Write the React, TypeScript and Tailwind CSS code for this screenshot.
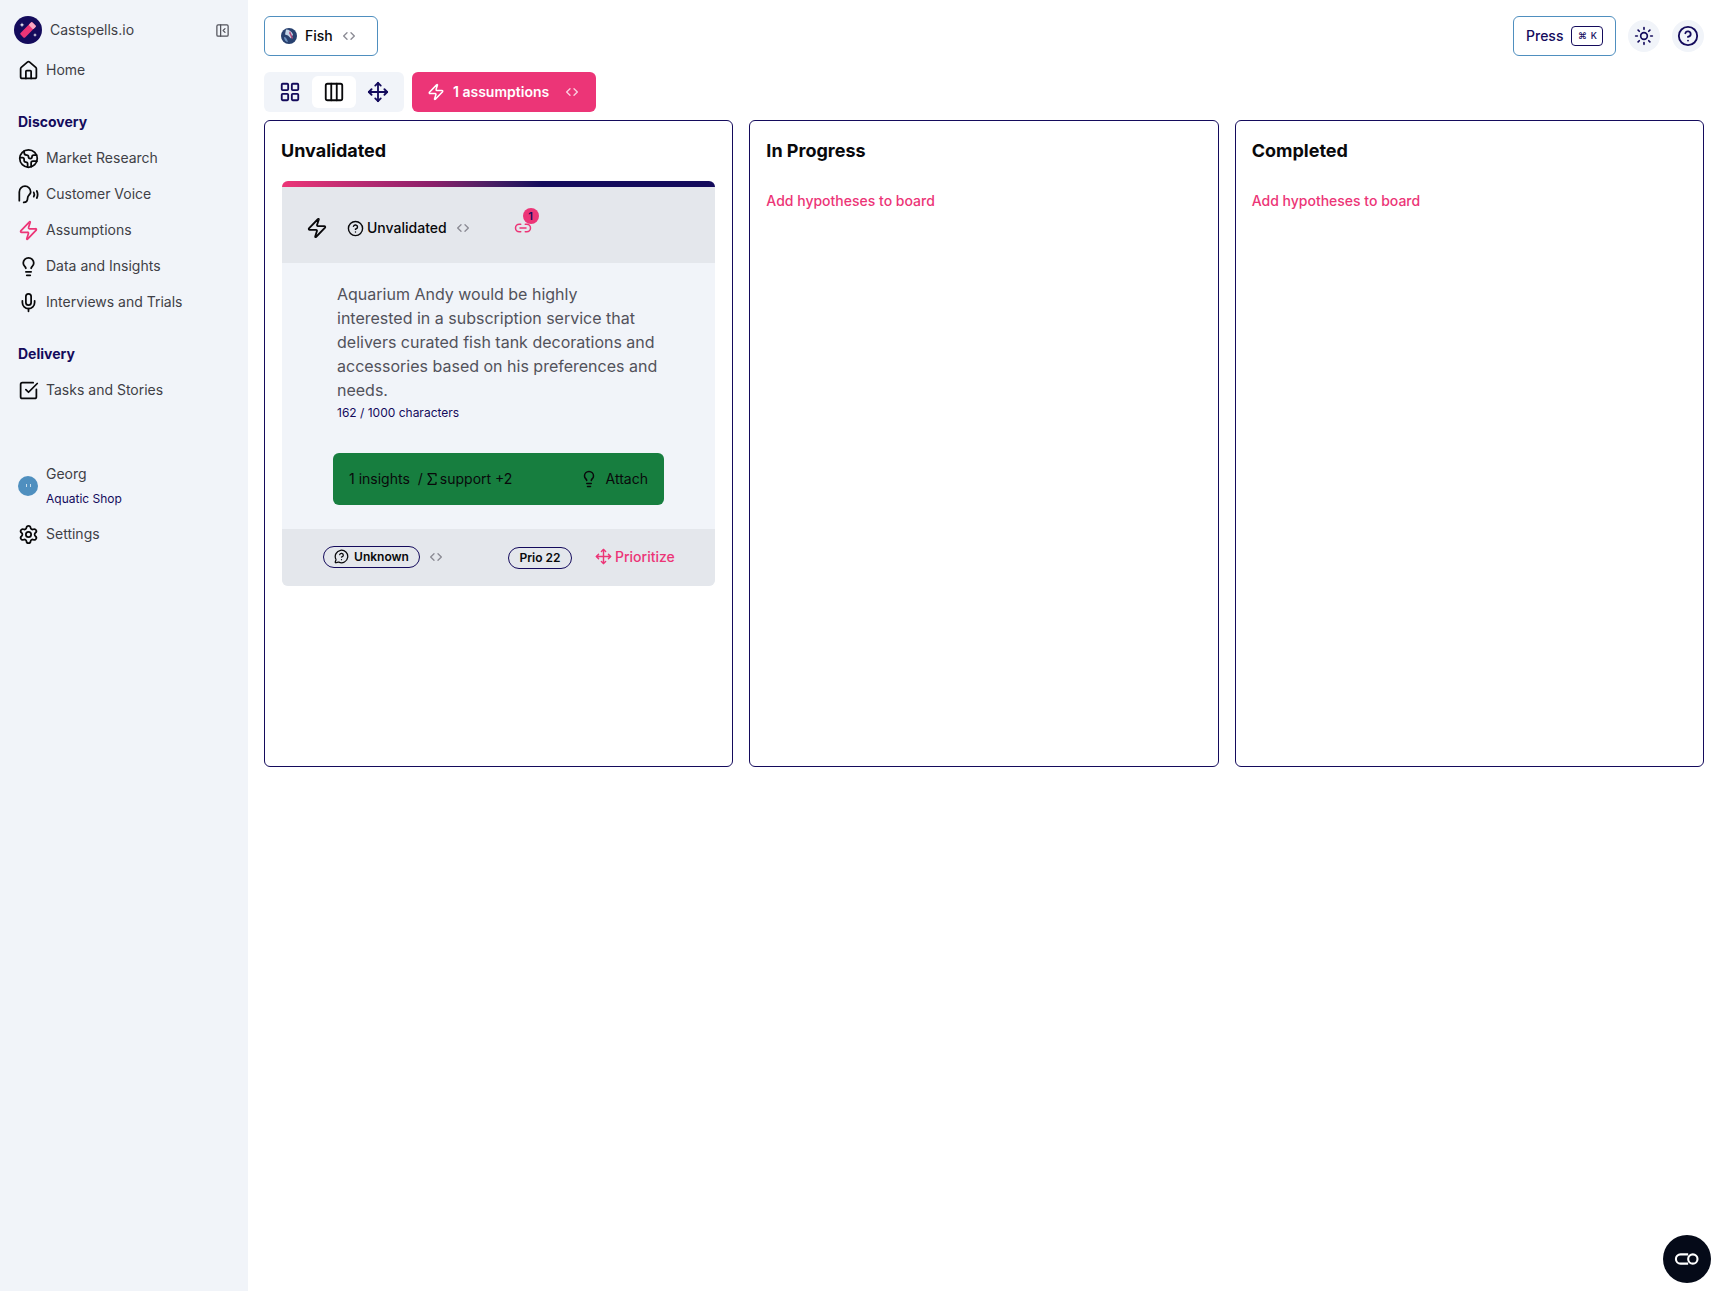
import {
  ChevronsLeftRight,
  CircleHelp,
  Columns3,
  Earth,
  House,
  LayoutGrid,
  Lightbulb,
  Link2,
  MessageCircleQuestion,
  Mic,
  Move,
  PanelLeftClose,
  Settings,
  Sigma,
  SquareCheckBig,
  Sun,
  Zap,
} from "lucide-react";
import type { ReactNode } from "react";

const VoiceIcon = ({ className }: { className?: string }) => (
  <svg viewBox="0 0 24 24" fill="none" stroke="currentColor" strokeWidth="2" strokeLinecap="round" className={className}>
    <path d="M1.500 19V9a6.500 6.500 0 0 1 13 0c0 3-3.500 4-3.500 7 0 3-2 5-4.500 5" />
    <path d="M18 9.500c.8 1.500.8 3.500 0 5" />
    <path d="M21.500 8c1.200 2.500 1.200 5.500 0 8" />
  </svg>
);

const Logo = () => (
  <svg viewBox="0 0 28 28" className="w-7 h-7 shrink-0">
    <circle cx="14" cy="14" r="14" fill="#140b5c" />
    <rect x="5.500" y="10.800" width="17" height="6.400" rx="1.200" fill="#ec3577" transform="rotate(-45 14 14)" />
    <rect x="18" y="10.800" width="4.500" height="6.400" rx="1" fill="#f7a8c4" transform="rotate(-45 14 14)" />
    <path d="M8 6.500l.6 1.800 1.800.6-1.800.6L8 11.300l-.6-1.800-1.800-.6 1.800-.6z" fill="#fff" />
    <path d="M21 17l.5 1.500 1.500.5-1.500.5-.5 1.500-.5-1.500L19 19l1.500-.5z" fill="#fff" />
  </svg>
);

const FishGlobe = () => (
  <svg viewBox="0 0 16 16" className="w-4 h-4 shrink-0">
    <circle cx="8" cy="8" r="8" fill="#27406f" />
    <path d="M5 1.500c3 0 6 2 7 5l-2 4-3-3-3-1z" fill="#c3d3e6" />
    <path d="M3 9c2 0 3 2 4 5-2 0-4-2-4-5z" fill="#6f93bf" />
    <path d="M9 3l3 7-1 1-3-6z" fill="#b0487a" />
  </svg>
);

const NavItem = ({ icon, label, className = "" }: { icon: ReactNode; label: string; className?: string }) => (
  <div className={`flex items-center h-9 pl-[17px] gap-[7px] text-sm text-[#3f3f46] ${className}`}>
    <span className="w-[22px] flex justify-center text-[#09090b]">{icon}</span>
    <span>{label}</span>
  </div>
);

const Sidebar = () => {
  return (
    <aside className="w-[248px] shrink-0 bg-[#f1f4f9] flex flex-col min-h-[1291px]">
      <div className="flex items-center pl-[14px] pr-[18px] pt-4">
        <Logo />
        <span className="ml-2 text-sm text-[#3f3f46]">Castspells.io</span>
        <PanelLeftClose size={15} className="ml-auto text-[#52525b]" />
      </div>
      <NavItem icon={<House size={21} />} label="Home" className="mt-2" />

      <h3 className="pl-[18px] mt-[24px] mb-[8px] text-sm leading-5 font-bold text-[#140b5c]">Discovery</h3>
      <NavItem icon={<Earth size={21} />} label="Market Research" />
      <NavItem icon={<VoiceIcon className="w-[21px] h-[21px]" />} label="Customer Voice" />
      <NavItem icon={<Zap size={21} className="text-[#ec3577]" />} label="Assumptions" />
      <NavItem icon={<Lightbulb size={21} />} label="Data and Insights" />
      <NavItem icon={<Mic size={21} />} label="Interviews and Trials" />

      <h3 className="pl-[18px] mt-[24px] mb-[8px] text-sm leading-5 font-bold text-[#140b5c]">Delivery</h3>
      <NavItem icon={<SquareCheckBig size={21} />} label="Tasks and Stories" />

      <div className="flex items-center pl-[18px] mt-[56px] gap-[8px]">
        <div className="w-5 h-5 rounded-full bg-[#4f8fbf] flex items-center justify-center">
          <div className="w-[5px] h-[3px] border-x border-white/70" />
        </div>
        <div>
          <p className="text-sm leading-5 text-[#3f3f46]">Georg</p>
          <p className="text-xs leading-4 mt-[7px] text-[#140b5c]">Aquatic Shop</p>
        </div>
      </div>
      <NavItem icon={<Settings size={21} />} label="Settings" className="mt-[9px]" />
    </aside>
  );
};

const EmptyColumn = ({ title }: { title: string }) => (
  <section className="flex-1 basis-0 min-w-0 border border-[#140b5c] rounded-md px-4 pt-[17px]">
    <h2 className="text-lg leading-[26px] font-bold text-[#09090b]">{title}</h2>
    <button className="block mt-[27px] text-sm leading-5 font-medium text-[#ec3577]">Add hypotheses to board</button>
  </section>
);

const HypothesisCard = () => (
  <article className="mt-[17px] mx-px rounded-md overflow-hidden bg-[#f1f4f9]">
    <div className="h-[6px] bg-gradient-to-r from-[#ec3577] via-[#8a1f6a] via-35% to-[#140b5c] to-60%" />

    <div className="h-[76px] bg-[#e4e7ec] flex items-center pl-[24px] pt-[6px]">
      <Zap size={22} className="text-[#09090b]" />
      <CircleHelp size={17} className="ml-[19px] text-[#09090b]" />
      <span className="ml-[3px] text-sm font-medium text-[#09090b]">Unvalidated</span>
      <ChevronsLeftRight size={16} className="ml-[8px] text-[#8b8b94]" />
      <div className="relative ml-[43px]">
        <Link2 size={18} className="text-[#ec3577]" />
        <span className="absolute -top-[11px] left-[9px] w-4 h-4 rounded-full bg-[#ec3577] text-[#140b5c] text-[11px] leading-4 font-semibold text-center">
          1
        </span>
      </div>
    </div>

    <div className="px-[51px] pt-[19px] pb-[24px]">
      <p className="mx-[4px] text-base leading-6 text-[#52525b]">
        Aquarium Andy would be highly
        <br />
        interested in a subscription service that
        <br />
        delivers curated fish tank decorations and
        <br />
        accessories based on his preferences and
        <br />
        needs.
      </p>
      <p className="mx-[4px] text-xs leading-4 mt-[3px] text-[#140b5c]">162 / 1000 characters</p>
      <button className="mt-[32px] w-[331px] h-[52px] rounded-md bg-[#177e3f] flex items-center pl-4 pr-4 text-sm text-[#09090b]">
        <span>1 insights</span>
        <span className="ml-2">/</span>
        <Sigma size={16} className="ml-px" />
        <span>support +2</span>
        <Lightbulb size={18} className="ml-auto" />
        <span className="ml-[8px]">Attach</span>
      </button>
    </div>

    <div className="h-[57px] bg-[#e4e7ec] flex items-center pl-[41px] pb-[2px]">
      <span className="flex items-center gap-[5px] h-[22px] w-[97px] justify-center border border-[#140b5c] rounded-full text-xs font-semibold text-[#09090b]">
        <MessageCircleQuestion size={15} />
        Unknown
      </span>
      <ChevronsLeftRight size={16} className="ml-[8px] text-[#8b8b94]" />
      <span className="ml-[64px] mt-[3px] flex items-center justify-center h-[22px] w-[64px] border border-[#140b5c] rounded-full text-xs font-semibold text-[#09090b]">
        Prio 22
      </span>
      <span className="ml-[23px] flex items-center gap-[3px] text-sm font-medium text-[#ec3577]">
        <Move size={17} />
        Prioritize
      </span>
    </div>
  </article>
);

const Toolbar = () => (
  <div className="flex gap-2 mt-4">
    <div className="w-[140px] h-10 bg-[#f1f4f9] rounded-md flex items-center pl-[4px] text-[#140b5c]">
      <span className="w-11 h-8 flex items-center justify-center">
        <LayoutGrid size={22} />
      </span>
      <span className="w-11 h-8 flex items-center justify-center bg-white rounded-md text-[#09090b]">
        <Columns3 size={22} />
      </span>
      <span className="w-11 h-8 flex items-center justify-center">
        <Move size={22} />
      </span>
    </div>
    <button className="w-[184px] h-10 rounded-md bg-[#ec3577] flex items-center pl-[15px] text-white text-sm font-semibold">
      <Zap size={18} />
      <span className="ml-[8px]">1 assumptions</span>
      <ChevronsLeftRight size={16} className="ml-[15px] text-[#fbd0e0]" />
    </button>
  </div>
);

export default function App() {
  return (
    <div className="flex min-h-screen bg-white font-['Inter',sans-serif]">
      <Sidebar />
      <main className="flex-1 min-w-0 pl-4 pr-[7px] pt-4">
        <div className="flex items-start justify-between">
          <button className="w-[114px] h-10 border border-[#4f8fbf] rounded-md flex items-center pl-4 text-sm font-medium text-[#09090b]">
            <FishGlobe />
            <span className="ml-2">Fish</span>
            <ChevronsLeftRight size={16} className="ml-[8px] text-[#8b8b94]" />
          </button>
          <div className="flex items-center">
            <button className="w-[103px] h-10 border border-[#4f8fbf] rounded-md flex items-center pl-[12px] text-sm font-medium text-[#140b5c]">
              Press
              <span className="ml-2 w-[32px] h-[20px] border border-[#140b5c] rounded text-[9px] flex items-center justify-center gap-1">
                <span>⌘</span>
                <span>K</span>
              </span>
            </button>
            <span className="ml-[12px] w-8 h-8 rounded-full bg-[#f1f4f9] flex items-center justify-center text-[#140b5c]">
              <Sun size={20} />
            </span>
            <span className="ml-3 w-8 h-8 rounded-full bg-[#f1f4f9] flex items-center justify-center text-[#140b5c]">
              <CircleHelp size={22} />
            </span>
          </div>
        </div>

        <Toolbar />

        <div className="flex gap-4 mt-2 h-[647px]">
          <section className="flex-1 basis-0 min-w-0 border border-[#140b5c] rounded-md px-4 pt-[17px]">
            <h2 className="text-lg leading-[26px] font-bold text-[#09090b]">Unvalidated</h2>
            <HypothesisCard />
          </section>
          <EmptyColumn title="In Progress" />
          <EmptyColumn title="Completed" />
        </div>
      </main>

      <button className="fixed right-0 bottom-[8px] w-12 h-12 rounded-full bg-[#050a18] flex items-center justify-center text-white">
        <svg viewBox="0 0 24 24" fill="none" stroke="currentColor" strokeWidth="1.800" className="w-7 h-7">
          <path d="M13 8H6.500a4 4 0 0 0 0 8H13" />
          <circle cx="17" cy="12" r="4" />
        </svg>
      </button>
    </div>
  );
}
